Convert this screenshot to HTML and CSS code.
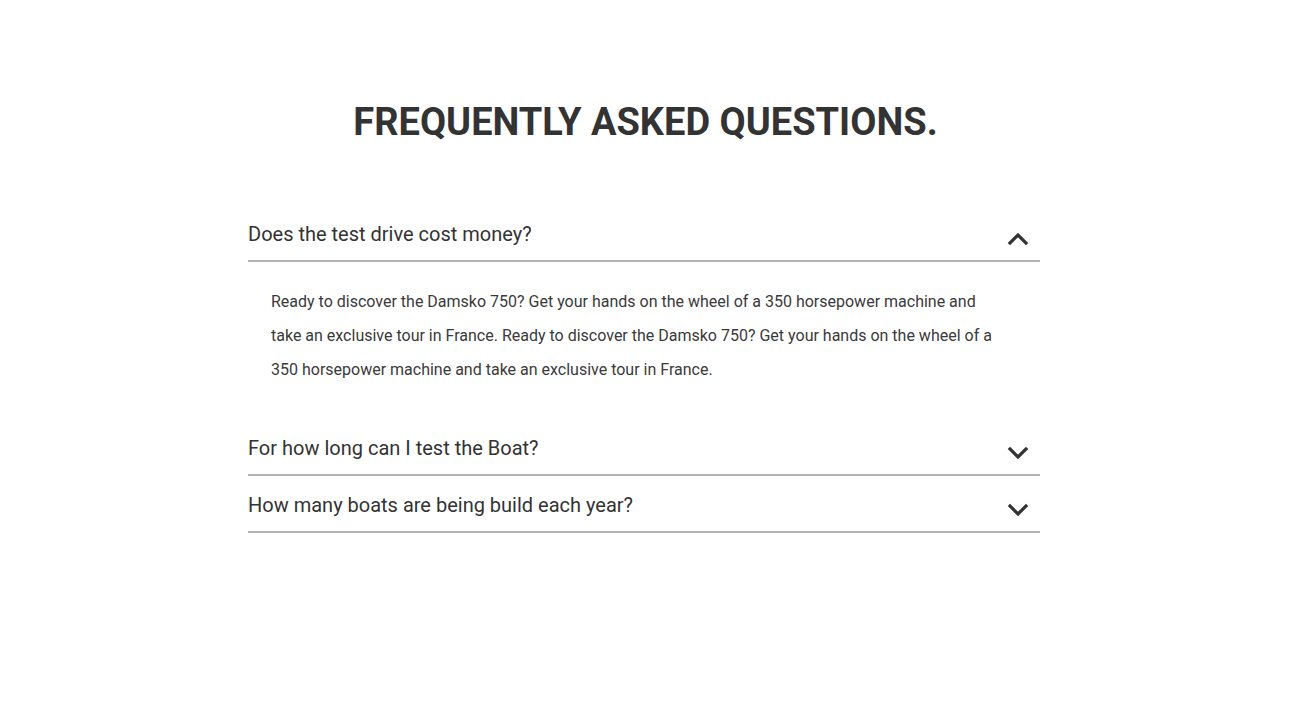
FILE: index.html
```html
<!DOCTYPE html>
<html lang="en">
<head>
<meta charset="utf-8">
<title>FAQ</title>
<link rel="stylesheet" href="styles.css">
</head>
<body>
<section class="faq">
  <h1 class="faq-title">FREQUENTLY ASKED QUESTIONS.</h1>
  <div class="faq-list">
    <div class="faq-item open">
      <div class="faq-head">
        <span class="faq-q">Does the test drive cost money?</span>
        <svg class="chev" width="22" height="14" viewBox="0 0 22 14"><polyline points="3,11 11,3 19,11" fill="none" stroke="#333" stroke-width="3.2" stroke-linecap="square"/></svg>
      </div>
      <div class="faq-answer">Ready to discover the Damsko 750? Get your hands on the wheel of a 350 horsepower machine and take an exclusive tour in France. Ready to discover the Damsko 750? Get your hands on the wheel of a 350 horsepower machine and take an exclusive tour in France.</div>
    </div>
    <div class="faq-item">
      <div class="faq-head">
        <span class="faq-q">For how long can I test the Boat?</span>
        <svg class="chev" width="22" height="14" viewBox="0 0 22 14"><polyline points="3,3 11,11 19,3" fill="none" stroke="#333" stroke-width="3.2" stroke-linecap="square"/></svg>
      </div>
    </div>
    <div class="faq-item">
      <div class="faq-head">
        <span class="faq-q">How many boats are being build each year?</span>
        <svg class="chev" width="22" height="14" viewBox="0 0 22 14"><polyline points="3,3 11,11 19,3" fill="none" stroke="#333" stroke-width="3.2" stroke-linecap="square"/></svg>
      </div>
    </div>
  </div>
</section>
</body>
</html>
```
FILE: styles.css
```css
html, body {
  margin: 0;
  padding: 0;
  background: #fff;
}
body {
  font-family: Roboto, "Liberation Sans", sans-serif;
  color: #333;
}
.faq {
  padding-top: 99px;
  display: flex;
  flex-direction: column;
  align-items: center;
}
.faq-title {
  margin: 0;
  font-size: 38px;
  line-height: 46px;
  font-weight: 700;
  color: #333;
  text-align: center;
}
.faq-list {
  width: 792px;
  margin-top: 60px;
  margin-right: 3px;
}
.faq-head {
  display: flex;
  align-items: center;
  justify-content: space-between;
  padding: 17px 0 14px 0;
  border-bottom: 2px solid #b3b3b3;
}
.faq-q {
  font-size: 20px;
  line-height: 24px;
}
.chev {
  display: block;
  margin-right: 11px;
  margin-top: 10px;
}
.faq-answer {
  padding: 23px 48px 32px 23px;
  font-size: 16px;
  line-height: 34px;
  color: #3a3a3a;
}
```
